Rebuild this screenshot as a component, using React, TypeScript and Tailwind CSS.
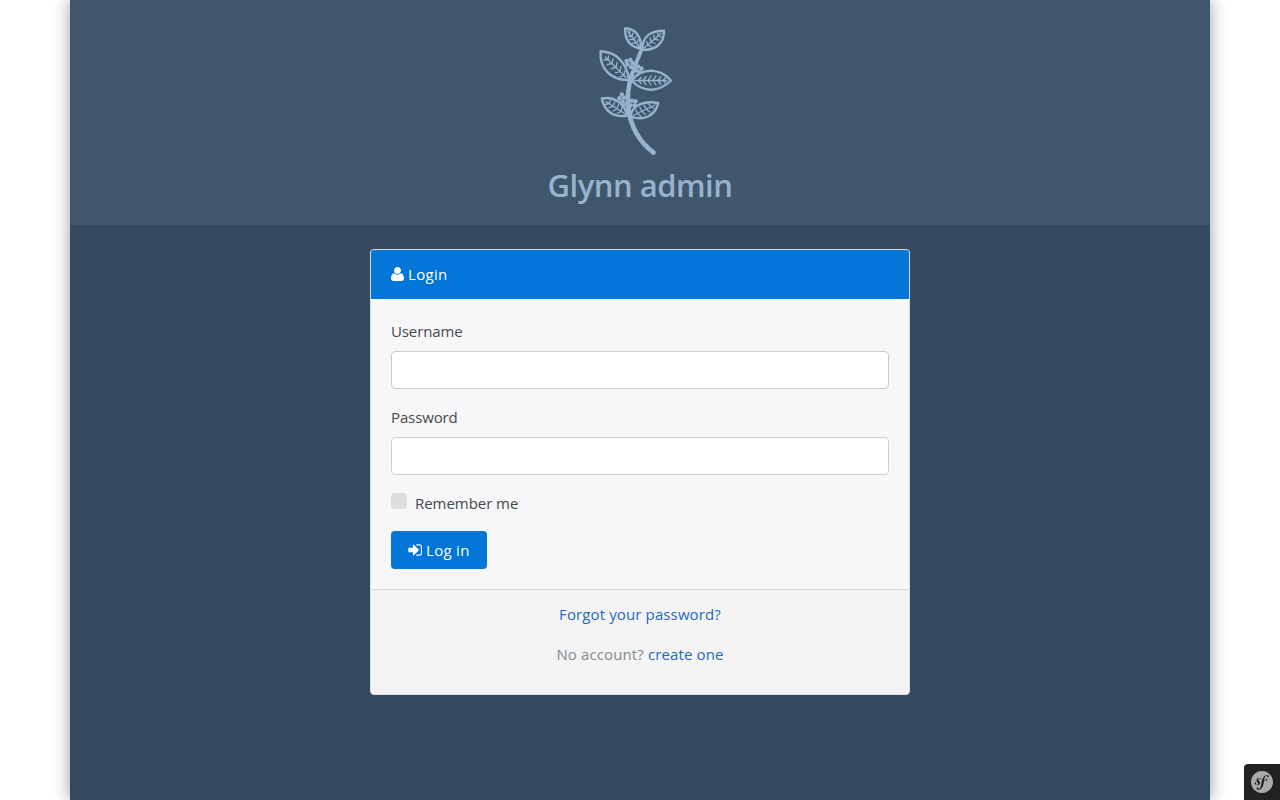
import { SiSymfony } from "react-icons/si";

function Leaf({ outline, veins }: { outline: string; veins: string }) {
  return (
    <g>
      <path d={outline} strokeWidth="2.4" />
      <path d={veins} strokeWidth="1.3" />
    </g>
  );
}

const berries = [
  [626.5, 61], [630.5, 60], [627.5, 64.5], [632.5, 63], [631, 67], [638, 66.5], [641.5, 68.5], [636.5, 70.5], [639.5, 72],
  [621.8, 94.5], [619.3, 98.3], [624, 97.5], [622.5, 101.5], [625, 104.5], [631.8, 100.8], [635.6, 101.3], [630.6, 105.4], [634.8, 105.2],
];

function Plant() {
  return (
    <svg viewBox="590 20 100 140" className="h-[140px] w-[100px]" fill="none" stroke="#97b2cd" strokeLinecap="round" strokeLinejoin="round">
      <Leaf
        outline="M640.3 48.5C629.5 47 624.2 38.5 625.3 28.2C636 28.7 642.2 37.5 640.3 48.5Z"
        veins="M627.5 31L639 46.5M629.5 33.5L630 30.8M631.5 36.5L628 35.8M632 36.7L633 33M634 39.5L630 39.5M634.4 39.8L636 36M636.5 42.8L632.5 43.2M636.8 43L638.2 39.5"
      />
      <Leaf
        outline="M642.3 49.5C642.3 36.5 650.5 30.5 664 30.7C664.3 43 655.5 51 642.3 49.5Z"
        veins="M644 48L661 33.5M658 36L657.5 33M658 36L661.3 37M654.5 39L653.7 35M654.5 39L658.5 40M651 42L650.2 38M651 42L655 43.5M647.5 45L646.8 41.3M647.5 45L651.3 46.3"
      />
      <Leaf
        outline="M629 80C609.5 80.5 599.5 67.5 600.6 51.3C615 52 626.5 61 629 80Z"
        veins="M605.5 57L626 77.5M608 59.5L608.6 56M608 59.5L604 60M612 63.5L613 58.8M612 63.5L607.3 64.5M616 67.5L617.2 62.5M616 67.5L611.2 68.7M620 71.5L621 66.5M620 71.5L615.5 72.8M624 75.5L624.5 71M624 75.5L619.8 76.8"
      />
      <Leaf
        outline="M631.5 80.5C642 67.5 659.5 67.5 671 80.5C658.5 93 642.5 92.5 631.5 80.5Z"
        veins="M634.5 80.5H667M663 80.5L665.3 77.8M663 80.5L665.3 83M658 80.5L661 76.3M658 80.5L661 84.5M653 80.5L656 75.8M653 80.5L656 85M648 80.5L651 75.8M648 80.5L651 85M643 80.5L646 76.5M643 80.5L646 84.5M638.5 80.5L641 77.5M638.5 80.5L641 83.5"
      />
      <Leaf
        outline="M627 115.5C613.5 118 604 110.5 601.8 98.5C613 96 624.5 102.5 627 115.5Z"
        veins="M606 101.5L624.5 113.5M609 103.5L610.5 100.5M609 103.5L605.3 104.5M613 106.2L614.8 102M613 106.2L609 107.8M617 108.8L618.7 104.5M617 108.8L613.2 111M621 111.4L622 107.5M621 111.4L617.5 113.3"
      />
      <Leaf
        outline="M630.5 116.3C632 104.5 644.5 100.5 658.2 103C655.5 116 643 121.5 630.5 116.3Z"
        veins="M633 115.5L655 105M651 107L648.8 104M651 107L654 108.5M646.5 109.2L644 105.2M646.5 109.2L650 112M642 111.3L639.8 107.2M642 111.3L645.3 114.5M637.5 113.4L635.8 110M637.5 113.4L640.8 116.3"
      />
      <path d="M641.5 49.5C637.5 60 633.5 69 631.5 76" strokeWidth="3.8" />
      <path d="M632 74C628 85 626.8 100 628.6 111" strokeWidth="4.6" />
      <path d="M628.2 108C630.5 124 638 141 653.5 152.5" strokeWidth="4.8" />
      <g fill="#97b2cd" stroke="none">
        {berries.map(([x, y]) => (
          <circle key={`${x}-${y}`} cx={x} cy={y} r="2.2" />
        ))}
      </g>
    </svg>
  );
}

function UserIcon() {
  return (
    <svg viewBox="192 128 1408 1536" className="h-[14px] w-[13px] shrink-0" fill="currentColor">
      <path d="M1600 1405q0 120-73 189.5t-194 69.5h-874q-121 0-194-69.5t-73-189.5q0-53 3.5-103.5t14-109 26.5-108.5 43-97.5 62-81 85.5-53.5 111.5-20q9 0 42 21.5t74.5 48 108 48 133.5 21.5 133.5-21.5 108-48 74.5-48 42-21.5q61 0 111.5 20t85.5 53.5 62 81 43 97.5 26.5 108.5 14 109 3.5 103.5zm-320-893q0 159-112.5 271.5t-271.5 112.5-271.5-112.5-112.5-271.5 112.5-271.5 271.5-112.5 271.5 112.5 112.5 271.5z" />
    </svg>
  );
}

function SignInIcon() {
  return (
    <svg viewBox="96 256 1568 1280" className="h-[12px] w-[14px] shrink-0" fill="currentColor">
      <path d="M1312 896q0 26-19 45l-544 544q-19 19-45 19t-45-19-19-45v-288h-448q-26 0-45-19t-19-45v-384q0-26 19-45t45-19h448v-288q0-26 19-45t45-19 45 19l544 544q19 19 19 45zm352-352v704q0 119-84.5 203.5t-203.5 84.5h-320q-13 0-22.5-9.5t-9.5-22.5q0-4-1-20t-.5-26.5 3-23.5 10-19.5 20.5-6.5h320q66 0 113-47t47-113v-704q0-66-47-113t-113-47h-312l-11.5-1-11.5-3-8-5.5-7-9-2-13.5q0-4-1-20t-.5-26.5 3-23.5 10-19.5 20.5-6.5h320q119 0 203.5 84.5t84.5 203.5z" />
    </svg>
  );
}

function Field({ id, label, type }: { id: string; label: string; type: string }) {
  return (
    <div className="mb-4">
      <label htmlFor={id} className="mb-2 block h-6 tracking-[-0.12px]">{label}</label>
      <input id={id} type={type} className="block h-[38px] w-full rounded border border-[#cccdd0] bg-white px-3 outline-none" />
    </div>
  );
}

export default function App() {
  return (
    <div className="h-screen overflow-hidden bg-white font-['Open_Sans','Noto_Sans',sans-serif] text-[15px] leading-6 text-[#464a4c]">
      <div className="mx-auto flex h-full w-[1140px] flex-col bg-[#34495e] shadow-[0_0_15px_rgba(0,0,0,0.4)]">
        <header className="flex h-[225px] flex-col items-center bg-[#3f566c] pt-5">
          <Plant />
          <h1 className="mt-1.5 text-[31px] leading-[38px] font-semibold tracking-[-0.5px] text-[#97b2cd]">Glynn admin</h1>
        </header>
        <main className="mx-auto mt-6 flex h-[446px] w-[540px] flex-col overflow-hidden rounded border border-[#d5dde3] bg-[#f7f7f9]">
          <div className="flex h-[49px] items-center gap-1 bg-[#0275d8] px-5 pb-px text-white">
            <UserIcon />
            <span className="tracking-[0.3px]">Login</span>
          </div>
          <form className="h-[290px] px-5 pt-5">
            <Field id="username" label="Username" type="text" />
            <Field id="password" label="Password" type="password" />
            <label className="mb-4 flex h-6 gap-2">
              <span className="mt-0.5 size-4 rounded bg-[#dddddd]" />
              <span className="h-6 tracking-[-0.05px]">Remember me</span>
            </label>
            <button type="button" className="flex h-[38px] w-24 items-center gap-1 rounded bg-[#0275d8] pl-[17px] text-white">
              <SignInIcon />
              <span className="tracking-[0.3px] whitespace-nowrap">Log in</span>
            </button>
          </form>
          <footer className="flex-1 border-t border-[#d5d6d9] bg-[#f4f4f4] pt-3 text-center tracking-[0.12px]">
            <p className="mb-4"><a className="text-[#2469c5]">Forgot your password?</a></p>
            <p className="text-[#818a91]">No account? <a className="text-[#2469c5]">create one</a></p>
          </footer>
        </main>
      </div>
      <div className="fixed right-0 bottom-0 flex size-9 items-center justify-center rounded-tl bg-[#222222]">
        <SiSymfony className="size-[22px] text-[#aaaaaa]" />
      </div>
    </div>
  );
}
